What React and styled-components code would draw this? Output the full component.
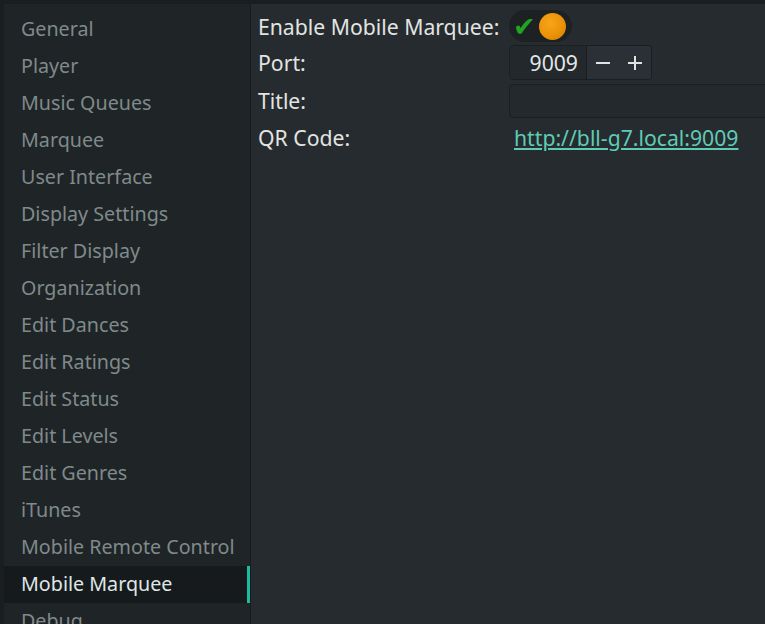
import styled, { createGlobalStyle } from 'styled-components';

const pages = [
  'General',
  'Player',
  'Music Queues',
  'Marquee',
  'User Interface',
  'Display Settings',
  'Filter Display',
  'Organization',
  'Edit Dances',
  'Edit Ratings',
  'Edit Status',
  'Edit Levels',
  'Edit Genres',
  'iTunes',
  'Mobile Remote Control',
  'Mobile Marquee',
  'Debug',
];

const GlobalStyle = createGlobalStyle`
  html, body {
    margin: 0;
    height: 100%;
    overflow: hidden;
    background: #1b1e21;
  }
  body {
    font-family: "Noto Sans", "Open Sans", sans-serif;
    font-size: 21.2px;
  }
`;

const App = () => {
  return (
    <Window>
      <GlobalStyle />
      <Sidebar>
        {pages.map((name) => (
          <NavItem key={name} $active={name === 'Mobile Marquee'}>
            {name}
          </NavItem>
        ))}
      </Sidebar>
      <Panel>
        <Form>
          <Label $first>Enable Mobile Marquee:</Label>
          <div>
            <Toggle>
              <Check>✔</Check>
              <Knob />
            </Toggle>
          </div>

          <Label>Port:</Label>
          <div>
            <SpinBox>
              <SpinValue>9009</SpinValue>
              <SpinButtons>
                <SpinButton>
                  <svg width="16" height="16" viewBox="0 0 16 16">
                    <path d="M1 8h14" stroke="#dfe3e3" strokeWidth="2" />
                  </svg>
                </SpinButton>
                <SpinButton>
                  <svg width="16" height="16" viewBox="0 0 16 16">
                    <path d="M1 8h14M8 1v14" stroke="#dfe3e3" strokeWidth="2" />
                  </svg>
                </SpinButton>
              </SpinButtons>
            </SpinBox>
          </div>

          <Label>Title:</Label>
          <TextInput />

          <Label>QR Code:</Label>
          <Link href="#">http://bll-g7.local:9009</Link>
        </Form>
      </Panel>
    </Window>
  );
};

const Window = styled.div`
  display: flex;
  height: 100vh;
  padding: 4px 0 0 4px;
  box-sizing: border-box;
`;

const Sidebar = styled.nav`
  width: 246px;
  flex-shrink: 0;
  background: #1f2427;
  border-right: 1px solid #181b1e;
  padding-top: 7px;
  overflow: hidden;
`;

const NavItem = styled.div`
  height: 37px;
  line-height: 35px;
  padding-left: 17px;
  font-size: 19.7px;
  white-space: nowrap;
  color: ${(p) => (p.$active ? '#dfe6e6' : '#7f8a8b')};
  background: ${(p) => (p.$active ? '#161a1c' : 'transparent')};
  border-right: 3px solid ${(p) => (p.$active ? '#1abc9c' : 'transparent')};
`;

const Panel = styled.main`
  flex: 1;
  background: #262b2f;
  padding: 6px 0 0 7px;
  overflow: hidden;
`;

const Form = styled.div`
  display: grid;
  grid-template-columns: 251px 1fr;
  row-gap: 3px;
  align-items: center;
`;

const Label = styled.div`
  color: #e2e4e2;
  white-space: nowrap;
  line-height: 30px;
  padding-top: ${(p) => (p.$first ? '2px' : '0')};
`;

const Toggle = styled.div`
  width: 63px;
  height: 32px;
  border-radius: 16px;
  background: #1d2124;
  display: flex;
  align-items: center;
  box-sizing: border-box;
  padding: 0 6px 0 4px;
  justify-content: space-between;
`;

const Check = styled.span`
  color: #1fa51f;
  font-size: 27px;
  line-height: 1;
  font-family: "DejaVu Sans", sans-serif;
`;

const Knob = styled.span`
  width: 27px;
  height: 27px;
  border-radius: 50%;
  background: radial-gradient(circle at 40% 38%, #f7a51a 0%, #ec9206 55%, #c97b04 100%);
`;

const SpinBox = styled.div`
  display: inline-flex;
  height: 35px;
  border: 1px solid #1b1f22;
  border-radius: 4px;
  overflow: hidden;
  box-sizing: border-box;
`;

const SpinValue = styled.div`
  width: 77px;
  background: #23282c;
  color: #e2e6e6;
  text-align: right;
  padding-right: 8px;
  box-sizing: border-box;
  line-height: 33px;
  border-right: 1px solid #1b1f22;
`;

const SpinButtons = styled.div`
  display: flex;
  background: #2a3036;
  padding: 0 8px;
  gap: 16px;
  align-items: center;
`;

const SpinButton = styled.button`
  border: 0;
  padding: 0;
  background: none;
  display: flex;
`;

const TextInput = styled.input`
  height: 34px;
  box-sizing: border-box;
  border: 1px solid #1b1f22;
  border-radius: 4px;
  background: #24292d;
  width: calc(100% + 10px);
  margin-top: 1px;
`;

const Link = styled.a`
  color: #5fcbb5;
  text-decoration: underline;
  padding-left: 5px;
  line-height: 33px;
`;

export default App;
